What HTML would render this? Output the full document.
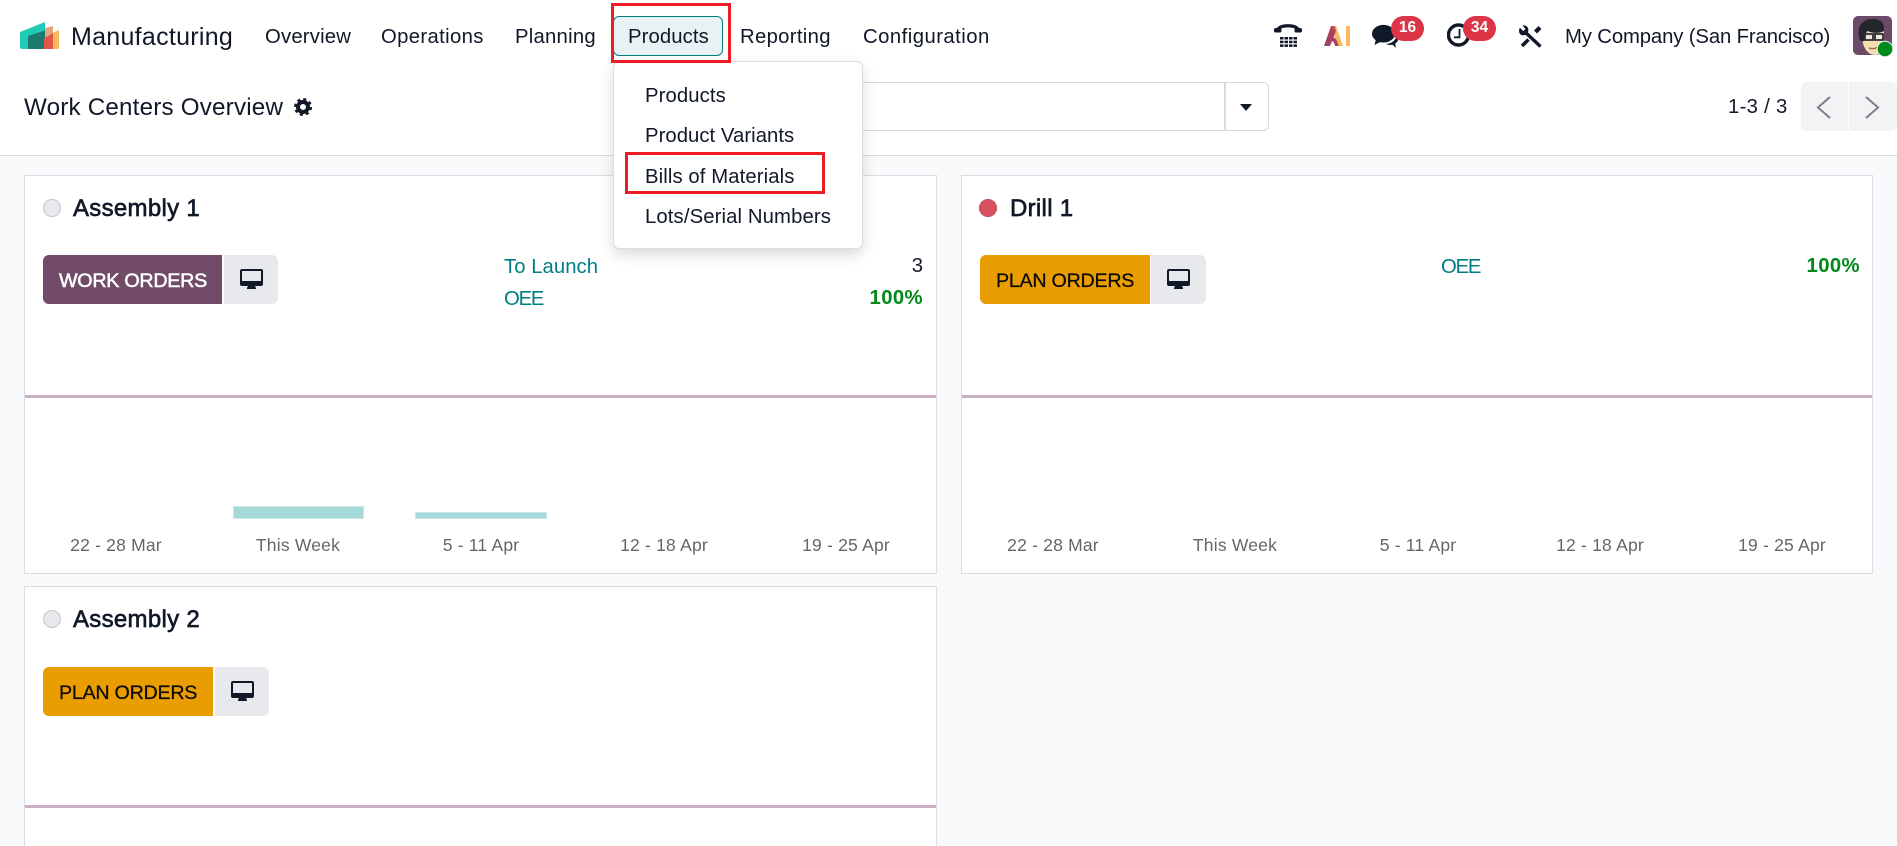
<!DOCTYPE html>
<html lang="en">
<head>
<meta charset="utf-8">
<title>Work Centers Overview</title>
<style>
html,body{margin:0;padding:0;width:1897px;height:846px;overflow:hidden;background:#f9fafb}
body{position:relative;font-family:"Liberation Sans",Arial,sans-serif;color:#111827}
.a,.t{position:absolute;box-sizing:border-box}
.t{white-space:nowrap;height:30px;line-height:30px;font-size:20.3px}
svg{position:absolute;display:block}
.card{background:#fff;border:1.5px solid #dcdde2}
.line{height:3px;background:#c9b1c2}
.btn{height:49px;border-radius:6px 0 0 6px}
.mon{height:49px;background:#e7e9ed;border-radius:0 6px 6px 0}
.ttl{font-size:24px;letter-spacing:.3px;-webkit-text-stroke:.65px #111827}
.bt{font-size:19.7px}
.teal{color:#017e84}
.grn{color:#008818;font-weight:700;letter-spacing:.4px;text-align:right;width:80px}
.lbl{font-size:17.5px;color:#666;width:140px;text-align:center;letter-spacing:.2px}
.dot{width:18px;height:18px;border-radius:50%}
.badge{background:#dc3545;color:#fff;font-weight:700;font-size:15.5px;height:25px;line-height:24px;text-align:center;border-radius:13px;width:33px;top:16px}
.bar{background:#a6dad8;border:1px solid #c6e8e6}
.red{border:3px solid #ee1c25;z-index:6}
</style>
</head>
<body>
<!-- header -->
<div class="a" style="left:0;top:0;width:1897px;height:156px;background:#fff;border-bottom:1.5px solid #d8dadd"></div>

<!-- logo -->
<svg style="left:19px;top:20px" width="42" height="32" viewBox="19 20 42 32">
<path d="M45 28l8-2v23h-8z" fill="#e8a57f"/>
<path d="M53 32.500l6-2.500v17.500a1.500 1.500 0 0 1-1.500 1.500H53z" fill="#fbb95f"/>
<path d="M20 32l25-10v27H22a2 2 0 0 1-2-2z" fill="#21cbb5"/>
<path d="M28 36l17-5.500V49H28z" fill="#1c7a70"/>
<path d="M44 38.500l9-5.500v16h-9z" fill="#e2574c"/>
</svg>
<div class="t" style="left:71px;top:22px;font-size:25px;letter-spacing:.28px">Manufacturing</div>

<!-- nav -->
<div class="t" style="left:265px;top:22px;letter-spacing:.2px">Overview</div>
<div class="t" style="left:381px;top:22px;letter-spacing:.36px">Operations</div>
<div class="t" style="left:515px;top:22px;letter-spacing:.24px">Planning</div>
<div class="a" style="left:613px;top:16px;width:110px;height:40px;background:#e6f2f3;border:1.5px solid #017e84;border-radius:6px"></div>
<div class="t" style="left:628px;top:22px;letter-spacing:.11px">Products</div>
<div class="t" style="left:740px;top:22px;letter-spacing:.32px">Reporting</div>
<div class="t" style="left:863px;top:22px;letter-spacing:.47px">Configuration</div>

<!-- systray -->
<svg style="left:1274px;top:23px" width="29" height="25" viewBox="0 0 29 25" fill="#111827">
<path d="M3.500 6.500C7 1.500 21 1.500 24.500 6.500" fill="none" stroke="#111827" stroke-width="3.200"/>
<rect x="0" y="5" width="7.500" height="4.500" rx="1.800"/>
<rect x="20.500" y="5" width="7.500" height="4.500" rx="1.800"/>
<g><rect x="6" y="14" width="3.500" height="2.500"/><rect x="10.500" y="14" width="3.500" height="2.500"/><rect x="15" y="14" width="3.500" height="2.500"/><rect x="19.500" y="14" width="3.500" height="2.500"/>
<rect x="6" y="17.700" width="3.500" height="2.500"/><rect x="10.500" y="17.700" width="3.500" height="2.500"/><rect x="15" y="17.700" width="3.500" height="2.500"/><rect x="19.500" y="17.700" width="3.500" height="2.500"/>
<rect x="6" y="21.400" width="3.500" height="2.500"/><rect x="10.500" y="21.400" width="3.500" height="2.500"/><rect x="15" y="21.400" width="3.500" height="2.500"/><rect x="19.500" y="21.400" width="3.500" height="2.500"/></g>
</svg>
<svg style="left:1324px;top:26px" width="26" height="20" viewBox="0 0 26 20">
<defs><linearGradient id="g1" x1="0" y1="1" x2="1" y2="0"><stop offset="0" stop-color="#8b4a7d"/><stop offset=".6" stop-color="#a93f5a"/><stop offset="1" stop-color="#c9504f"/></linearGradient></defs>
<path d="M7 0h5l7 20h-5z" fill="#f6b860"/>
<path d="M7 0h3.500l1.500 5L6 20H0z" fill="url(#g1)"/>
<path d="M2 17c1-5 5-7 8-5.500 2 1 3.500 4 4.500 8.500h-3.500c-.5-3-1.500-5-3.500-5-2 0-3 2-3.500 4z" fill="#a8405f"/>
<rect x="22" y="0" width="4" height="20" fill="#fbb95f"/>
</svg>
<svg style="left:1372px;top:24px" width="30" height="25" viewBox="0 0 30 25" fill="#111827">
<ellipse cx="11.500" cy="9.700" rx="11.500" ry="8.800"/>
<path d="M4 15L2.500 21 10 17z"/>
<path d="M24.500 12c-1 5-5.500 7.500-10.500 8 2 1 4.500 1.200 6.500.8l3.500 3-.8-4.200c2.500-1.500 3.800-4.500 3.300-7.100z"/>
</svg>
<div class="a badge" style="left:1391px">16</div>
<svg style="left:1447px;top:23px" width="25" height="25" viewBox="0 0 25 25" fill="none" stroke="#111827">
<circle cx="11.500" cy="12" r="10" stroke-width="3.400"/>
<path d="M12.500 6v8.300H7" stroke-width="1.800"/>
</svg>
<div class="a badge" style="left:1463px">34</div>
<svg style="left:1518px;top:25px" width="25" height="23" viewBox="0 0 25 23" fill="none" stroke="#111827">
<path d="M22 2.500l-4.500 4.500" stroke-width="4.200"/>
<path d="M13 12L4 21" stroke-width="3.600"/>
<path d="M7.500 7.500L22 21.500" stroke="#fff" stroke-width="6"/>
<path d="M7 7l15.500 14.500" stroke-width="3.400"/>
<path d="M2 2.800L5.200 6 7.500 4 4.600.6C7.800-.3 10.800 2.200 10.300 5.600L9.800 8.200 7.800 10 5.200 10.300C2 10.500-.4 6.600 2 2.800z" fill="#111827" stroke="none"/>
</svg>
<div class="t" style="left:1565px;top:22px;letter-spacing:-.12px">My Company (San Francisco)</div>

<!-- avatar -->
<svg style="left:1853px;top:16px" width="41" height="41" viewBox="0 0 41 41">
<rect x="0" y="0" width="39" height="39" rx="5" fill="#6a4a68"/>
<path d="M9 20c0 10 5 19 13 19 6 0 9-4 9-9V15H11z" fill="#f4deb2"/>
<path d="M7 24C3 12 8 3 20 3c7 0 12 3 11 12-5 3-12 2-17 0-1 3-2 5-2 8-1 3-3 3-5 1z" fill="#24262e"/>
<path d="M12 18h8v6h-8zM22 18h8v6h-8z" fill="#efe9da" stroke="#2d2d33" stroke-width="1.800"/>
<path d="M16 32c3 1 6 1 8-1" fill="none" stroke="#a8674b" stroke-width="1.500"/>
<circle cx="32" cy="33" r="7.800" fill="#008a1c" stroke="#e8f2ee" stroke-width="1"/>
</svg>

<!-- control panel -->
<div class="t" style="left:24px;top:92.500px;font-size:24.2px;letter-spacing:.2px">Work Centers Overview</div>
<svg style="left:294px;top:98px" width="18" height="18" viewBox="0 0 18 18">
<circle cx="9" cy="9" r="5" fill="none" stroke="#111827" stroke-width="4"/>
<circle cx="9" cy="9" r="7.500" fill="none" stroke="#111827" stroke-width="3" stroke-dasharray="3 2.890"/>
</svg>
<div class="a" style="left:700px;top:82px;width:569px;height:49px;background:#fff;border:1.5px solid #d8dadd;border-radius:0 6px 6px 0"></div>
<div class="a" style="left:1224px;top:83px;width:1.500px;height:47px;background:#d8dadd"></div>
<div class="a" style="left:1240px;top:104px;width:0;height:0;border-left:6.500px solid transparent;border-right:6.500px solid transparent;border-top:7px solid #111827"></div>
<div class="t" style="left:1728px;top:92px;letter-spacing:.3px">1-3 / 3</div>
<div class="a" style="left:1801px;top:82px;width:47px;height:49px;background:#f2f3f5;border-radius:6px 0 0 6px"></div>
<div class="a" style="left:1849px;top:82px;width:48px;height:49px;background:#f2f3f5;border-radius:0 6px 6px 0"></div>
<svg style="left:1815px;top:95px" width="70" height="25" viewBox="0 0 70 25" fill="none" stroke="#7b7f85" stroke-width="2">
<path d="M15 2L3 12.500 15 23"/><path d="M51 2l12 10.500L51 23"/>
</svg>

<!-- card 1 -->
<div class="a card" style="left:24px;top:175px;width:913px;height:399px"></div>
<div class="a dot" style="left:43px;top:199px;background:#e7e9ed;border:1.5px solid #c4c6cb"></div>
<div class="t ttl" style="left:73px;top:194px">Assembly 1</div>
<div class="a btn" style="left:43px;top:255px;width:179px;background:#714b67"></div>
<div class="t bt" style="left:59px;top:266px;color:#fff;letter-spacing:-.27px;-webkit-text-stroke:.55px #fff">WORK ORDERS</div>
<div class="a mon" style="left:224px;top:255px;width:54px"></div>
<svg style="left:240px;top:269px" width="23" height="20" viewBox="0 0 23 20"><path d="M2 0h19a2 2 0 0 1 2 2v13a2 2 0 0 1-2 2h-6l1 2v1H7v-1l1-2H2a2 2 0 0 1-2-2V2a2 2 0 0 1 2-2zm0 2v10h19V2z" fill="#111827"/></svg>
<div class="t teal" style="left:504px;top:251.500px;letter-spacing:.05px">To Launch</div>
<div class="t" style="left:843px;width:80px;top:251px;text-align:right">3</div>
<div class="t teal" style="left:504px;top:283.500px;letter-spacing:-1.2px">OEE</div>
<div class="t grn" style="left:843px;top:283px">100%</div>
<div class="a line" style="left:25px;top:395px;width:911px"></div>
<div class="a bar" style="left:233px;top:506px;width:131px;height:13px"></div>
<div class="a bar" style="left:415px;top:512px;width:132px;height:7px"></div>
<div class="t lbl" style="left:46px;top:530px">22 - 28 Mar</div>
<div class="t lbl" style="left:228px;top:530px">This Week</div>
<div class="t lbl" style="left:411px;top:530px">5 - 11 Apr</div>
<div class="t lbl" style="left:594px;top:530px">12 - 18 Apr</div>
<div class="t lbl" style="left:776px;top:530px">19 - 25 Apr</div>

<!-- card 2 -->
<div class="a card" style="left:961px;top:175px;width:912px;height:399px"></div>
<div class="a dot" style="left:979px;top:199px;background:#d9505f;border:1.5px solid #c8485a"></div>
<div class="t ttl" style="left:1010px;top:194px">Drill 1</div>
<div class="a btn" style="left:980px;top:255px;width:170px;background:#e99d00"></div>
<div class="t bt" style="left:996px;top:266px;letter-spacing:-.27px;color:#0b0b0b;-webkit-text-stroke:.25px #0b0b0b">PLAN ORDERS</div>
<div class="a mon" style="left:1151px;top:255px;width:55px"></div>
<svg style="left:1167px;top:269px" width="23" height="20" viewBox="0 0 23 20"><path d="M2 0h19a2 2 0 0 1 2 2v13a2 2 0 0 1-2 2h-6l1 2v1H7v-1l1-2H2a2 2 0 0 1-2-2V2a2 2 0 0 1 2-2zm0 2v10h19V2z" fill="#111827"/></svg>
<div class="t teal" style="left:1441px;top:251.500px;letter-spacing:-1.2px">OEE</div>
<div class="t grn" style="left:1780px;top:251px">100%</div>
<div class="a line" style="left:962px;top:395px;width:910px"></div>
<div class="t lbl" style="left:983px;top:530px">22 - 28 Mar</div>
<div class="t lbl" style="left:1165px;top:530px">This Week</div>
<div class="t lbl" style="left:1348px;top:530px">5 - 11 Apr</div>
<div class="t lbl" style="left:1530px;top:530px">12 - 18 Apr</div>
<div class="t lbl" style="left:1712px;top:530px">19 - 25 Apr</div>

<!-- card 3 -->
<div class="a card" style="left:24px;top:586px;width:913px;height:280px"></div>
<div class="a dot" style="left:43px;top:610px;background:#e7e9ed;border:1.5px solid #c4c6cb"></div>
<div class="t ttl" style="left:73px;top:605px">Assembly 2</div>
<div class="a btn" style="left:43px;top:667px;width:170px;background:#e99d00"></div>
<div class="t bt" style="left:59px;top:678px;letter-spacing:-.27px;color:#0b0b0b;-webkit-text-stroke:.25px #0b0b0b">PLAN ORDERS</div>
<div class="a mon" style="left:215px;top:667px;width:54px"></div>
<svg style="left:231px;top:681px" width="23" height="20" viewBox="0 0 23 20"><path d="M2 0h19a2 2 0 0 1 2 2v13a2 2 0 0 1-2 2h-6l1 2v1H7v-1l1-2H2a2 2 0 0 1-2-2V2a2 2 0 0 1 2-2zm0 2v10h19V2z" fill="#111827"/></svg>
<div class="a line" style="left:25px;top:805px;width:911px"></div>

<!-- dropdown -->
<div class="a" style="left:613px;top:61px;width:250px;height:188px;background:#fff;border:1px solid #dcdde2;border-radius:6px;box-shadow:0 6px 14px rgba(0,0,0,.14);z-index:4"></div>
<div class="t" style="left:645px;top:81px;z-index:5;letter-spacing:.11px">Products</div>
<div class="t" style="left:645px;top:121px;z-index:5;letter-spacing:.05px">Product Variants</div>
<div class="t" style="left:645px;top:162px;z-index:5;letter-spacing:.1px">Bills of Materials</div>
<div class="t" style="left:645px;top:202px;z-index:5;letter-spacing:.12px">Lots/Serial Numbers</div>

<!-- annotation rectangles -->
<div class="a red" style="left:611px;top:3px;width:120px;height:60px"></div>
<div class="a red" style="left:625px;top:152px;width:200px;height:42px"></div>
</body>
</html>
